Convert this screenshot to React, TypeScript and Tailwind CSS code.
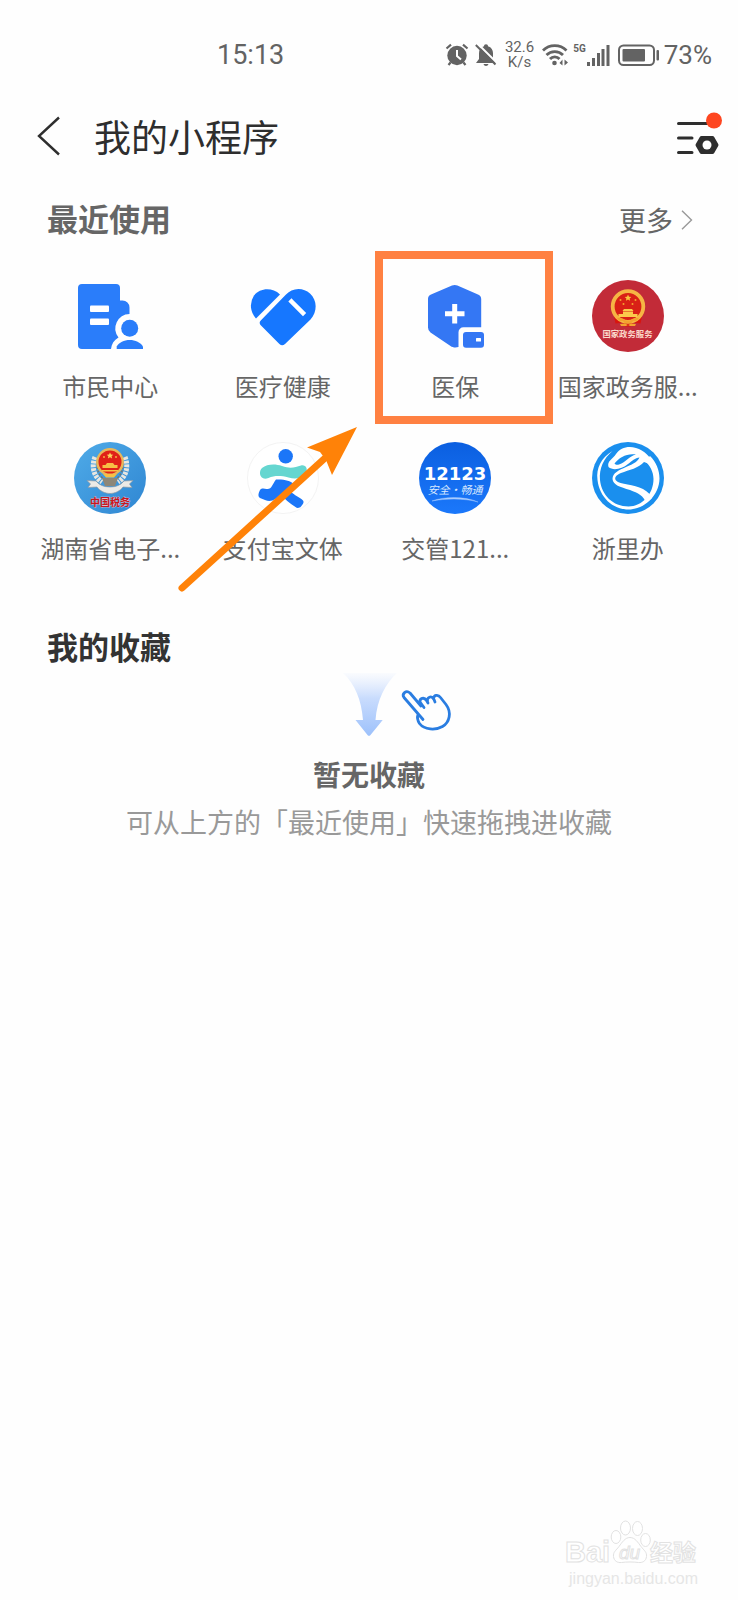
import type { ReactNode } from "react";

function CitizenIcon() {
  return (
    <svg viewBox="0 0 72 72" className="size-18" aria-hidden="true">
      <path
        d="M8 4h34a4 4 0 0 1 4 4v12.500h2.500a7 7 0 0 1 7 7V34a14.500 14.500 0 0 0-11 23.500C40 60 37.500 64 37 69H8a4 4 0 0 1-4-4V8a4 4 0 0 1 4-4z"
        fill="#2a7dfa"
      />
      <rect x="16" y="25.500" width="19" height="6.500" rx="1" fill="#fff" />
      <rect x="16" y="38.500" width="19" height="6.500" rx="1" fill="#fff" />
      <circle cx="55.700" cy="48.300" r="8.500" fill="#2a7dfa" />
      <path d="M42.700 69v-2.500C45 62.500 50 60 55.700 60S66.500 62.500 69 66.500V69z" fill="#2a7dfa" />
    </svg>
  );
}

function HealthIcon() {
  return (
    <svg viewBox="0 0 72 72" className="size-18" aria-hidden="true">
      <path d="M9 38.500A18.500 18.500 0 0 1 7 15.500C13 8 25 7 33 14.500z" fill="#1677ff" />
      <path
        d="M14 40.300 38.500 15C45 7.500 56 7 63 13.500c7.500 7 7.500 18.500.5 26L38 64a4 4 0 0 1-5.600 0L14 45.500a3.600 3.600 0 0 1 0-5.200z"
        fill="#1677ff"
      />
      <path d="m44.500 21.500 11.500 11.500" stroke="#fff" strokeWidth="4.500" strokeLinecap="square" />
    </svg>
  );
}

function InsuranceIcon() {
  return (
    <svg viewBox="0 0 72 72" className="size-18" aria-hidden="true">
      <path
        d="M33 5.600a6.500 6.500 0 0 1 5.400 0L59 14.500a5 5 0 0 1 3.200 4.600v28.200H44.500a5 5 0 0 0-5 5V67c-3 .9-5.800.5-8-1L11.500 52.500A6 6 0 0 1 9 47.600V19.100a5 5 0 0 1 3-4.600z"
        fill="#3477f4"
      />
      <path d="M35.700 24v19.500M26 33.700h19.500" stroke="#fff" strokeWidth="5" />
      <rect x="44" y="52" width="21" height="15.700" rx="3" fill="#3477f4" />
      <rect x="57" y="58" width="5" height="3.500" rx="0.500" fill="#fff" />
    </svg>
  );
}

function GovServiceIcon() {
  return (
    <svg viewBox="0 0 72 72" className="size-18" aria-hidden="true">
      <circle cx="36" cy="36" r="36" fill="#c22b38" />
      <path d="M22 36.500h28l-1.500 7-7-1-3 4h-5l-3-4-7 1z" fill="#d8150f" />
      <circle cx="36" cy="26.500" r="15.300" fill="#d92016" stroke="#f6b544" strokeWidth="3.800" />
      <path
        d="m36 14.500 1 2.200 2.300.2-1.700 1.600.5 2.300-2.100-1.200-2.100 1.200.5-2.300-1.700-1.600 2.300-.2z"
        fill="#f9c53f"
      />
      <g fill="#f3a32f">
        <circle cx="28.500" cy="20" r="1" />
        <circle cx="43.500" cy="20" r="1" />
        <circle cx="31.500" cy="24" r="1" />
        <circle cx="40.500" cy="24" r="1" />
        <path d="M32 29h8l1.500 2h-11zM31 31.500h10V34h4.500v3h-19v-3H31z" fill="#fbc94b" />
        <path d="M25 38.500c4-1 7 0 8.500 2h5c1.500-2 4.500-3 8.500-2l-3 2.500h-3l-1.500 2h-7l-1.500-2h-3zM28 44l5-.5 3 1.500 3-1.500 5 .5-1 2h-5l-2-1-2 1h-5z" />
      </g>
      <text
        x="35.500"
        y="57"
        textAnchor="middle"
        fontSize="8.400"
        fontWeight="700"
        fill="#fbd9cb"
      >
        国家政务服务
      </text>
    </svg>
  );
}

function TaxIcon() {
  return (
    <svg viewBox="0 0 72 72" className="size-18" aria-hidden="true">
      <defs>
        <linearGradient id="tax-sky" x1="0" y1="0" x2="1" y2="1">
          <stop offset="0" stopColor="#4fabe8" />
          <stop offset="1" stopColor="#2f86d2" />
        </linearGradient>
      </defs>
      <circle cx="36" cy="36" r="36" fill="url(#tax-sky)" />
      <path
        d="M21 15c-4 10-1 20 7 25M51 15c4 10 1 20-7 25"
        fill="none"
        stroke="#e8e6e0"
        strokeWidth="5"
        strokeDasharray="2.800 1"
      />
      <path
        d="M24 18c-2 8 0 15 6 19M48 18c2 8 0 15-6 19"
        fill="none"
        stroke="#77736b"
        strokeWidth="1.500"
        strokeDasharray="2 1.500"
      />
      <path d="M28 36h16l-3 8H31z" fill="#8d8778" />
      <path
        d="M13 38.500l9 .5c3 4 8 6 14 6s11-2 14-6l9-.5-3.500 3.500 2.500 3.500-9-.5c-3 4-8 6.500-13 6.500S26 49 23 45l-9 .5 2.500-3.500z"
        fill="#eceae6"
        stroke="#8b98a4"
        strokeWidth="0.700"
      />
      <circle cx="36" cy="20" r="12.700" fill="#e02118" stroke="#e8b75a" strokeWidth="2.400" />
      <path d="m36 10.500 1 2.100 2.200.2-1.600 1.500.5 2.200-2.100-1.200-2.100 1.200.5-2.200-1.600-1.500 2.200-.2z" fill="#fbd35a" />
      <g fill="#f7bf45">
        <circle cx="30" cy="15" r="0.900" />
        <circle cx="42" cy="15" r="0.900" />
        <path d="M33 21h6l1.500 2h3V26h-15v-3h3zM28 28h16v1.500H28z" />
        <path d="M29 32h14l-3 3.500h-8z" />
      </g>
      <text
        x="36"
        y="63.500"
        textAnchor="middle"
        fontSize="10"
        fontWeight="700"
        fill="#c8161d"
        stroke="#e9c9d4"
        strokeWidth="0.600"
        paintOrder="stroke"
      >
        中国税务
      </text>
    </svg>
  );
}

function SportIcon() {
  return (
    <svg viewBox="0 0 72 72" className="size-18" aria-hidden="true">
      <circle cx="36" cy="36" r="35.500" fill="#fff" stroke="#f3f3f3" />
      <circle cx="38.700" cy="14.300" r="7.200" fill="#1b76f8" />
      <path
        d="M15 26c5-4 13-4.500 20-2 8 3 13 1.500 19-.5 5-1 7.500 4 4.500 8-4 5-10 6-17 4-8-2-14-2-20 .5-5 2-8-.5-8.500-4-.2-2.500.5-4.700 2-6z"
        fill="#65d6d0"
      />
      <path
        d="M29 37.500c8-.5 15 1.500 17 4 1.500 3-1 5.500-2 8 3 4 9 5.500 12 9 1.500 2-.5 4-2 6-1.500 1.700-4 2-5.500.5C42 61 38 57 33.500 52.500c-4 5-9.500 8-15.500 5.500L13 56c-2.500-1.500-1.500-5 0-8 1.500-2 4-1.500 6.500-1 5 1 6-5 9.500-9.500z"
        fill="#1b76f8"
      />
    </svg>
  );
}

function TrafficIcon() {
  return (
    <svg viewBox="0 0 72 72" className="size-18" aria-hidden="true">
      <defs>
        <linearGradient id="traffic-bg" x1="0" y1="0" x2="0" y2="1">
          <stop offset="0" stopColor="#0b5fe0" />
          <stop offset="1" stopColor="#1b78fb" />
        </linearGradient>
      </defs>
      <circle cx="36" cy="36" r="36" fill="url(#traffic-bg)" />
      <text
        x="36"
        y="38"
        textAnchor="middle"
        fontSize="18"
        fontWeight="700"
        fill="#fff"
        className="font-['DejaVu_Sans',sans-serif]"
      >
        12123
      </text>
      <text x="36" y="52" textAnchor="middle" fontSize="11" fontStyle="italic" fill="#d8e8ff">
        安全·畅通
      </text>
      <path d="M13 59c12-4.500 33-5 46 1-14-4-33-3.500-46-1z" fill="#a9ccff" stroke="#a9ccff" strokeWidth="0.400" />
    </svg>
  );
}

function ZheliIcon() {
  return (
    <svg viewBox="0 0 72 72" className="size-18" aria-hidden="true">
      <circle cx="36" cy="36" r="36" fill="#1a8fee" />
      <path
        d="M20.500 9C9 16 4 26 5.500 38c2 17 15 29.500 31 29.500S67.500 53 67.500 36.500C67.500 28 64 20 58 14l-5 5c5 4.500 8.500 11 8.500 18C61.500 52 50 64.500 36.500 64.500 21 64.500 9.500 53 8 38 7 26.500 11.500 16.500 20.500 9z"
        fill="#fff"
      />
      <path
        d="M16.500 25C14.500 19 21 17 24 12c4-6 12-8.500 20-6 8 2 15 9 19 18l-11-4c-5 6-15 8-23 11-5 2-7 5-5 7.500 4 4.500 18 3.500 27 8.500 5 3 8 6 9 9l-6 5c-2-7-8-10-16-13-10-3-17-5-17.500-11 0-6 6.500-9 13.500-12 8-3 12-6 13.500-9.500-4.500.5-7.500 3.500-11.500 6.500-6 5-15 7-19.500 3z"
        fill="#fff"
      />
      <path d="M22.500 21.500C27 15.500 35 11 44 12.500c-7 1.500-10 8-17 10-1.700.6-3.500.5-4.500-1z" fill="#1a8fee" />
    </svg>
  );
}

const APPS: { name: string; icon: ReactNode; marked?: boolean }[] = [
  { name: "市民中心", icon: <CitizenIcon /> },
  { name: "医疗健康", icon: <HealthIcon /> },
  { name: "医保", icon: <InsuranceIcon />, marked: true },
  { name: "国家政务服...", icon: <GovServiceIcon /> },
  { name: "湖南省电子...", icon: <TaxIcon /> },
  { name: "支付宝文体", icon: <SportIcon /> },
  { name: "交管121...", icon: <TrafficIcon /> },
  { name: "浙里办", icon: <ZheliIcon /> },
];

function StatusBar() {
  return (
    <div className="mt-8 flex h-[46px] items-center justify-between pr-[26px] pl-[217px] font-[Roboto,sans-serif] text-[#636363]">
      <span className="text-[27px]">15:13</span>
      <div className="flex items-center">
        {/* alarm */}
        <svg viewBox="0 0 24 24" className="size-6" aria-hidden="true">
          <circle cx="12" cy="12.500" r="9.700" fill="currentColor" />
          <path d="M1.500 5.500 6 1.700M22.500 5.500 18 1.700M5.500 19.500l-2 2.500M18.500 19.500l2 2.500" stroke="currentColor" strokeWidth="2.200" />
          <path d="M12 7v6l4 3.500" fill="none" stroke="#fff" strokeWidth="2" />
        </svg>
        {/* muted bell */}
        <svg viewBox="0 0 22 24" className="ml-1.5 h-6 w-[22px]" aria-hidden="true">
          <path
            d="M11 1.200c1.300 0 2 .8 2 2 3.500 1 5 3.800 5 7V16l3 4H1l3-4v-5.800c0-3.200 1.500-6 5-7 0-1.200.7-2 2-2zM8.500 21h5c-.4 1.300-1.300 2-2.500 2s-2.100-.7-2.500-2z"
            fill="currentColor"
          />
          <path d="M2.500.5 22 20" stroke="#fff" strokeWidth="2" />
          <path d="M.8 2 20.500 21.500" stroke="currentColor" strokeWidth="2" />
        </svg>
        <span className="ml-2 flex flex-col items-center text-[15px]/[15px]">
          <span>32.6</span>
          <span>K/s</span>
        </span>
        {/* wifi */}
        <svg viewBox="0 0 27 24" className="ml-2 h-6 w-[27px]" aria-hidden="true">
          <g fill="none" stroke="currentColor" strokeWidth="2.800">
            <path d="M1 7.500C7.500 1 18 1 24.500 7.500" />
            <path d="M4.500 12c4.500-4.500 12-4.500 16.500 0" />
            <path d="M8 16c2.500-2.800 7-2.800 9.500 0" />
          </g>
          <circle cx="12.500" cy="20" r="2.300" fill="currentColor" />
          <path d="M20.500 16.500v6L17.500 20zM22.500 22.500v-6l3.500 3z" fill="currentColor" />
        </svg>
        <span className="ml-1 h-6 text-[10px]/[12px] font-bold">5G</span>
        <svg viewBox="0 0 24 22" className="h-[22px] w-6" aria-hidden="true">
          <g fill="currentColor">
            <rect x="1" y="18" width="3" height="4" />
            <rect x="6" y="14" width="3" height="8" />
            <rect x="11" y="9" width="3" height="13" />
            <rect x="15.500" y="5" width="3" height="17" />
            <rect x="20.500" y="1" width="3" height="21" />
          </g>
        </svg>
        <svg viewBox="0 0 42 22" className="ml-2 h-[22px] w-[42px]" aria-hidden="true">
          <rect x="1" y="1.500" width="35" height="19.500" rx="4.500" fill="none" stroke="currentColor" strokeWidth="2" />
          <rect x="4.500" y="5" width="22.500" height="12.500" rx="1" fill="currentColor" />
          <rect x="38.500" y="6" width="2.500" height="10.500" rx="1" fill="currentColor" />
        </svg>
        <span className="ml-1 text-[26px]">73%</span>
      </div>
    </div>
  );
}

function NavBar() {
  return (
    <header className="mt-[22px] flex h-18 items-center pr-4 pl-9 text-[#2e2e2e]">
      <button type="button" aria-label="返回" className="flex h-11 w-6 items-center">
        <svg viewBox="0 0 24 40" className="h-10 w-6" aria-hidden="true">
          <path d="M23 1.500 3 20l20 18.500" fill="none" stroke="currentColor" strokeWidth="2.400" />
        </svg>
      </button>
      <h1 className="ml-[34px] text-[37px]/[48px]">我的小程序</h1>
      <button type="button" aria-label="设置" className="mb-1 ml-auto">
        <svg viewBox="0 0 46 46" className="size-[46px]" aria-hidden="true">
          <path
            d="M2.500 12.500h30M2.500 27H16M2.500 41.500H16"
            stroke="currentColor"
            strokeWidth="3"
            strokeLinecap="round"
          />
          <path
            d="M25.500 25h11a2 2 0 0 1 1.700 1l4 7a2 2 0 0 1 0 2l-4 7a2 2 0 0 1-1.700 1h-11a2 2 0 0 1-1.700-1l-4-7a2 2 0 0 1 0-2l4-7a2 2 0 0 1 1.700-1z"
            fill="currentColor"
          />
          <circle cx="31" cy="34" r="4.500" fill="#fff" />
          <circle cx="38" cy="9.500" r="8" fill="#fe4620" />
        </svg>
      </button>
    </header>
  );
}

function EmptyState() {
  return (
    <div className="flex flex-col items-center text-center">
      <svg viewBox="0 0 170 66" className="h-[66px] w-[170px]" aria-hidden="true">
        <defs>
          <linearGradient id="drop-fade" x1="0" y1="0" x2="0" y2="1">
            <stop offset="0" stopColor="#d5e3fd" stopOpacity="0.100" />
            <stop offset="0.400" stopColor="#c9dcfd" />
            <stop offset="1" stopColor="#9dc1fb" />
          </linearGradient>
        </defs>
        <path
          d="M59 1h54C101 12 93 28 91.500 48h7.200L86.500 63a2 2 0 0 1-3 0L71.500 48H79C77.500 28 71 12 59 1z"
          fill="url(#drop-fade)"
        />
        <path
          d="M139 47.500 120 25.500c-2.500-3.500 2-8 6-4.500l11 13M140 35.500l-4-5.500c-.5-3.500 4-5.500 6.500-1.500l1.500 2.500M143.500 30c-1-5 4-7 6.500-2.500l1 2.500M149.500 27c0-4 4.500-5 7-1.500l5.500 7c6 8 3.500 18-3.500 22-7 4-18 3.500-23-3-2.300-3.500-2.500-6-1.500-9"
          fill="none"
          stroke="#2a7de1"
          strokeWidth="2.800"
          strokeLinecap="round"
          strokeLinejoin="round"
        />
      </svg>
      <p className="mt-4 text-[28px]/[40px] font-bold text-[#666]">暂无收藏</p>
      <p className="mt-2.5 text-[27px]/[36px] text-[#999]">可从上方的「最近使用」快速拖拽进收藏</p>
    </div>
  );
}

function Watermark() {
  return (
    <footer className="mt-auto flex flex-col items-end pr-10 pb-3 font-['Liberation_Sans','Noto_Sans_CJK_SC',sans-serif]">
      <svg viewBox="0 0 134 50" className="h-[50px] w-[134px]" role="img" aria-label="Baidu 经验">
        <g fill="#fff" stroke="#e2e2e2" strokeWidth="1">
          <text x="1" y="42" fontSize="29" fontWeight="700">Bai</text>
          <ellipse cx="52" cy="17" rx="4.800" ry="6.500" />
          <ellipse cx="61.500" cy="8" rx="5" ry="7" />
          <ellipse cx="73.500" cy="8.500" rx="5" ry="7" />
          <ellipse cx="81.500" cy="20" rx="4.800" ry="6.500" />
          <path d="M66 17.500c5 0 8 5 11 9s6 5.500 5.500 10c-.5 4.500-4 6.500-8 6-5.500-.7-11.500-.7-17 0-4 .5-7.500-1.500-8-6-.5-4.500 2.500-6 5.500-10s6-9 11-9z" />
          <text x="55" y="39" fontSize="19" fontStyle="italic">du</text>
          <text x="86" y="41" fontSize="23" fontWeight="700">经验</text>
        </g>
      </svg>
      <span className="text-base/[18px] text-[#e6e6e6]">jingyan.baidu.com</span>
    </footer>
  );
}

export default function App() {
  return (
    <div className="flex min-h-screen flex-col bg-[#fefefe] font-['Noto_Sans_CJK_SC',sans-serif]">
      <StatusBar />
      <NavBar />

      <section>
        <div className="mt-6 flex h-12 items-center justify-between pr-[45px] pl-[47px] text-[#666]">
          <h2 className="pb-1 text-[31px]/[44px] font-bold">最近使用</h2>
          <a href="#more" className="flex items-center gap-2 text-[27px]/[48px]">
            更多
            <svg viewBox="0 0 12 20" className="h-5 w-3" aria-hidden="true">
              <path d="m1 .7 9.500 9.300L1 19.300" fill="none" stroke="#999" strokeWidth="1.400" />
            </svg>
          </a>
        </div>

        <div className="relative mt-9 px-6">
          <ul className="grid grid-cols-4 gap-y-[38px]">
            {APPS.map((app) => (
              <li key={app.name} className="relative">
                <a href="#app" className="flex flex-col items-center">
                  {app.icon}
                  <span className="mt-4 text-2xl/[36px] whitespace-nowrap text-[#666]">{app.name}</span>
                </a>
                {app.marked && (
                  <span className="pointer-events-none absolute -top-[29px] -right-[11px] -bottom-5 left-[6px] border-8 border-[#ff8142]" />
                )}
              </li>
            ))}
          </ul>
          {/* pointer towards the marked app */}
          <svg
            viewBox="0 0 184 168"
            className="pointer-events-none absolute top-[145px] left-[176px] h-[168px] w-[184px]"
            aria-hidden="true"
          >
            <path d="M6 163 148 34" stroke="#ff8208" strokeWidth="7" strokeLinecap="round" />
            <path d="m181 2-25 48-6-15-6-8-13-4.500z" fill="#ff8208" />
          </svg>
        </div>
      </section>

      <section>
        <h2 className="mt-[58px] pb-1 pl-[47px] text-[31px]/[44px] font-bold text-[#333]">我的收藏</h2>
        <EmptyState />
      </section>

      <Watermark />
    </div>
  );
}
